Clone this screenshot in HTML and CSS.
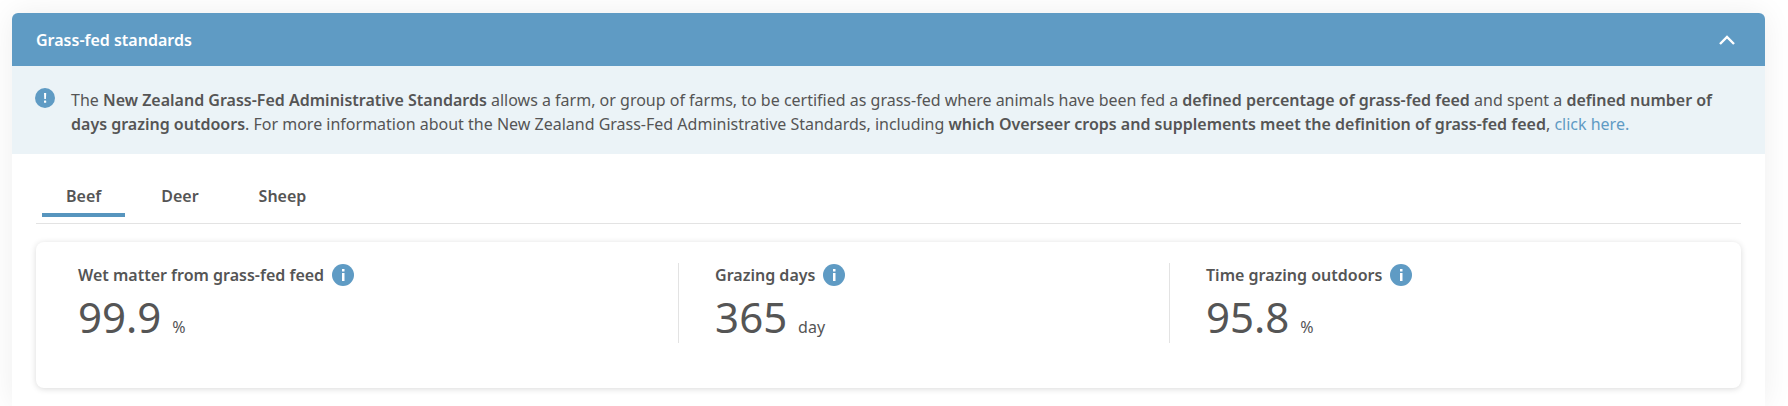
FILE: index.html
```html
<!DOCTYPE html>
<html lang="en">
<head>
    <meta charset="UTF-8">
    <meta name="viewport" content="width=device-width, initial-scale=1.0">
    <title>Grass-fed standards</title>
    <link rel="stylesheet" href="styles.css">
</head>
<body>
    <section class="panel">
        <header class="panel-header">
            <h2>Grass-fed standards</h2>
            <button class="toggle" type="button" aria-label="Collapse" aria-expanded="true">
                <svg width="16" height="10" viewBox="0 0 16 10" fill="none" stroke="currentColor" stroke-width="2.4">
                    <path d="M1 9l7-7 7 7"/>
                </svg>
            </button>
        </header>

        <div class="notice">
            <svg class="notice-icon" width="20" height="20" viewBox="0 0 20 20">
                <circle cx="10" cy="10" r="10" fill="#5f9bc4"/>
                <path d="M9 5h2.2l-.3 6H9.300z" fill="#fff"/>
                <rect x="9" y="12.500" width="2.200" height="2.200" rx=".5" fill="#fff"/>
            </svg>
            <p>The <strong>New Zealand Grass-Fed Administrative Standards</strong> allows a farm, or group of farms, to be certified as grass-fed where animals have been fed a <strong>defined percentage of grass-fed feed</strong> and spent a <strong>defined number of days grazing outdoors</strong>. For more information about the New Zealand Grass-Fed Administrative Standards, including <strong>which Overseer crops and supplements meet the definition of grass-fed feed</strong>, <a href="#">click here.</a></p>
        </div>

        <div class="panel-body">
            <div class="tabs" role="tablist">
                <button class="tab active" type="button" role="tab" aria-selected="true">Beef</button>
                <button class="tab" type="button" role="tab" aria-selected="false">Deer</button>
                <button class="tab" type="button" role="tab" aria-selected="false">Sheep</button>
            </div>

            <div class="stats">
                <div class="stat">
                    <div class="stat-label">
                        <span>Wet matter from grass-fed feed</span>
                        <button class="info" type="button" aria-label="About wet matter">
                            <svg width="22" height="22" viewBox="0 0 22 22">
                                <circle cx="11" cy="11" r="11" fill="#5f9bc4"/>
                                <path d="M10 5h2.500v2.500H10zM10 9h2.500v8H10z" fill="#fff"/>
                            </svg>
                        </button>
                    </div>
                    <div class="stat-value">99.9 <span class="unit">%</span></div>
                </div>
                <div class="stat">
                    <div class="stat-label">
                        <span>Grazing days</span>
                        <button class="info" type="button" aria-label="About grazing days">
                            <svg width="22" height="22" viewBox="0 0 22 22">
                                <circle cx="11" cy="11" r="11" fill="#5f9bc4"/>
                                <path d="M10 5h2.500v2.500H10zM10 9h2.500v8H10z" fill="#fff"/>
                            </svg>
                        </button>
                    </div>
                    <div class="stat-value">365 <span class="unit">day</span></div>
                </div>
                <div class="stat">
                    <div class="stat-label">
                        <span>Time grazing outdoors</span>
                        <button class="info" type="button" aria-label="About time grazing outdoors">
                            <svg width="22" height="22" viewBox="0 0 22 22">
                                <circle cx="11" cy="11" r="11" fill="#5f9bc4"/>
                                <path d="M10 5h2.500v2.500H10zM10 9h2.500v8H10z" fill="#fff"/>
                            </svg>
                        </button>
                    </div>
                    <div class="stat-value">95.8 <span class="unit">%</span></div>
                </div>
            </div>
        </div>
    </section>
</body>
</html>
```
FILE: styles.css
```css
* {
    box-sizing: border-box;
}
body {
    margin: 0;
    padding: 13px 23px 0 12px;
    background-color: #fff;
    color: #555;
    font-family: "Noto Sans", sans-serif;
    font-size: 16px;
    line-height: 24px;
}
button {
    padding: 0;
    border: 0;
    background: none;
    color: inherit;
    font: inherit;
    cursor: pointer;
}
svg {
    display: block;
}
.panel {
    border-radius: 6px 6px 0 0;
    background-color: #fff;
    box-shadow: 0 0 30px rgba(0, 0, 0, 0.07);
}
.panel-header {
    display: flex;
    justify-content: space-between;
    align-items: center;
    padding: 15px 30px 14px 24px;
    border-radius: 6px 6px 0 0;
    background-color: #5f9bc4;
    color: #fff;
}
.panel-header h2 {
    margin: 0;
    font-size: 16px;
    font-weight: 600;
}
.notice {
    display: flex;
    gap: 16px;
    padding: 22px 24px 18px 23px;
    background-color: #ebf3f7;
}
.notice-icon {
    flex: none;
}
.notice p {
    margin: 0;
}
.notice strong {
    font-weight: 600;
}
.notice a {
    color: #5f9bc4;
    text-decoration: none;
}
.panel-body {
    padding: 24px 24px 18px;
}
.tabs {
    display: flex;
    gap: 12px;
    padding: 0 6px 6px;
    border-bottom: 1px solid #e3e3e3;
}
.tab {
    padding: 6px 24px 5px;
    border-bottom: 4px solid transparent;
    font-weight: 600;
}
.tab.active {
    border-bottom-color: #5795be;
}
.stats {
    display: grid;
    grid-template-columns: 62fr 49fr 55fr;
    margin-top: 18px;
    padding: 21px 21px 45px;
    border-radius: 8px;
    box-shadow: 0 1px 6px rgba(0, 0, 0, 0.15);
}
.stat {
    height: 80px;
    padding-left: 36px;
}
.stat + .stat {
    border-left: 1px solid #e3e3e3;
}
.stat:first-child {
    padding-left: 21px;
}
.stat-label {
    display: flex;
    align-items: center;
    gap: 8px;
    font-weight: 600;
}
.stat-value {
    margin-top: 6px;
    font-size: 42px;
    line-height: 48px;
}
.unit {
    font-size: 16px;
}
```
